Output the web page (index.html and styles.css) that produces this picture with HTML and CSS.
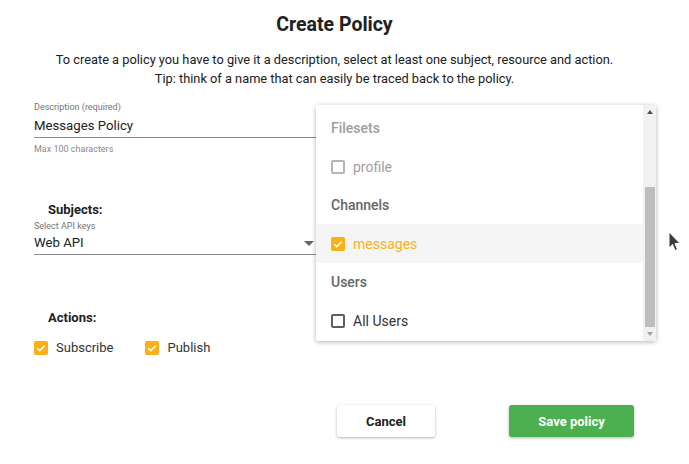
FILE: index.html
```html
<!DOCTYPE html>
<html>
<head>
<meta charset="utf-8">
<link rel="stylesheet" href="styles.css">
</head>
<body>
<div class="dialog">
  <div class="header">
    <h1 class="title">Create Policy</h1>
    <p class="intro">To create a policy you have to give it a description, select at least one subject, resource and action.<br>Tip: think of a name that can easily be traced back to the policy.</p>
  </div>

  <div class="form">
    <div class="field desc-field">
      <label class="flabel">Description (required)</label>
      <div class="finput">Messages Policy</div>
      <div class="fhint">Max 100 characters</div>
    </div>

    <div class="section subjects">
      <div class="section-title">Subjects:</div>
      <div class="field">
        <label class="flabel sub-label">Select API keys</label>
        <div class="finput select">Web API<span class="caret"></span></div>
      </div>
    </div>

    <div class="section actions">
      <div class="section-title">Actions:</div>
      <div class="checks">
        <span class="check"><span class="box on"><svg viewBox="0 0 14 14" width="14" height="14"><path d="M3.2 7.2l2.5 2.5 5-5" fill="none" stroke="#fff" stroke-width="1.6"/></svg></span>Subscribe</span>
        <span class="check"><span class="box on"><svg viewBox="0 0 14 14" width="14" height="14"><path d="M3.2 7.2l2.5 2.5 5-5" fill="none" stroke="#fff" stroke-width="1.6"/></svg></span>Publish</span>
      </div>
    </div>

    <div class="buttons">
      <button class="btn cancel">Cancel</button>
      <button class="btn save">Save policy</button>
    </div>
  </div>

  <div class="menu">
    <div class="menu-list">
      <div class="mhead dim">Filesets</div>
      <div class="mitem dim"><span class="box off dimbox"></span>profile</div>
      <div class="mhead">Channels</div>
      <div class="mitem selected"><span class="box on"><svg viewBox="0 0 14 14" width="14" height="14"><path d="M3.2 7.2l2.5 2.5 5-5" fill="none" stroke="#fff" stroke-width="1.6"/></svg></span>messages</div>
      <div class="mhead">Users</div>
      <div class="mitem"><span class="box off"></span>All Users</div>
    </div>
    <div class="scrollbar">
      <span class="sarrow up"></span>
      <div class="strack"><div class="sthumb"></div></div>
      <span class="sarrow down"></span>
    </div>
  </div>

  <svg class="cursor" width="14" height="22" viewBox="0 0 14 22"><path d="M1 1 L1 17 L4.5 13.5 L7 19.5 L9.5 18.5 L7 12.5 L12 12.5 Z" fill="#3c3c3c" stroke="#fff" stroke-width="1"/></svg>
</div>
</body>
</html>
```
FILE: styles.css
```css
* { box-sizing: border-box; }
body {
  margin: 0;
  background: #fff;
  font-family: Roboto, "Liberation Sans", sans-serif;
  color: #212121;
}
.dialog {
  position: relative;
  width: 689px;
  height: 464px;
  overflow: hidden;
}
.header { width: 669px; }
.title {
  margin: 0;
  padding-top: 13px;
  text-align: center;
  font-size: 19.5px;
  font-weight: 700;
  line-height: 24px;
  color: #212121;
}
.intro {
  margin: 14px 0 0;
  text-align: center;
  font-size: 12.8px;
  line-height: 18.5px;
  color: #212121;
}
.form {
  padding-left: 34px;
  margin-top: 13px;
}
.field { width: 284px; }
.flabel {
  display: block;
  font-size: 9px;
  line-height: 12px;
  color: #757575;
}
.finput {
  position: relative;
  margin-top: 3px;
  font-size: 13.2px;
  line-height: 20px;
  padding-bottom: 1px;
  border-bottom: 1px solid #8a8a8a;
  color: #212121;
}
.finput.select { margin-top: 1px; }
.fhint {
  font-size: 9px;
  line-height: 12px;
  margin-top: 5px;
  color: #8a8a8a;
}
.caret {
  position: absolute;
  right: 4px;
  top: 8px;
  width: 0; height: 0;
  border-left: 5px solid transparent;
  border-right: 5px solid transparent;
  border-top: 5px solid #666;
}
.section-title {
  font-size: 13px;
  font-weight: 700;
  line-height: 16px;
  padding-left: 14px;
  color: #212121;
}
.sub-label { margin-top: 2px; }
.subjects { margin-top: 47px; }
.actions { margin-top: 55px; }
.checks {
  display: flex;
  gap: 32px;
  margin-top: 14px;
  font-size: 13px;
  line-height: 16px;
  color: #333;
}
.check { display: flex; align-items: center; gap: 8px; }
.box {
  display: inline-flex;
  width: 14px; height: 14px;
  border-radius: 2px;
  flex: none;
}
.box.on { background: #fbb116; }
.box.off { border: 2px solid #5f5f5f; }
.box.dimbox { border-color: #b5b5b5; }
.buttons {
  display: flex;
  margin-top: 49px;
  padding-left: 303px;
  gap: 74px;
}
.btn {
  font-family: Roboto, "Liberation Sans", sans-serif;
  font-size: 13px;
  font-weight: 700;
  height: 32px;
  border: none;
  border-radius: 3px;
  box-shadow: 0 1px 3px rgba(0,0,0,0.3);
}
.cancel { width: 98px; background: #fff; color: #212121; }
.save { width: 125px; background: #4caf50; color: #fff; }

.menu {
  position: absolute;
  left: 316px;
  top: 105px;
  width: 340px;
  height: 236px;
  background: #fff;
  box-shadow: 0 1px 5px rgba(0,0,0,0.3);
  display: flex;
  border-radius: 2px;
}
.menu-list { flex: 1; padding-top: 4px; }
.mhead {
  height: 38px;
  line-height: 38px;
  padding-left: 15px;
  font-size: 14px;
  font-weight: 500;
  color: #666;
}
.mhead.dim { color: #9e9e9e; }
.mitem {
  height: 39px;
  display: flex;
  align-items: center;
  gap: 8px;
  padding-left: 15px;
  font-size: 14px;
  color: #333;
}
.mitem.dim { color: #a0a0a0; }
.mitem.selected { background: #f5f5f5; color: #fbb116; }
.scrollbar {
  width: 13px;
  background: #f1f1f1;
  display: flex;
  flex-direction: column;
  align-items: center;
}
.sarrow { width: 0; height: 0; margin: 5px 0; border-left: 3px solid transparent; border-right: 3px solid transparent; }
.sarrow.up { border-bottom: 4px solid #505050; }
.sarrow.down { border-top: 4px solid #a3a3a3; }
.strack { flex: 1; width: 10px; display: flex; flex-direction: column; justify-content: flex-end; }
.sthumb { height: 140px; background: #bdbdbd; }
.cursor {
  position: absolute;
  left: 668px;
  top: 231px;
}
```
